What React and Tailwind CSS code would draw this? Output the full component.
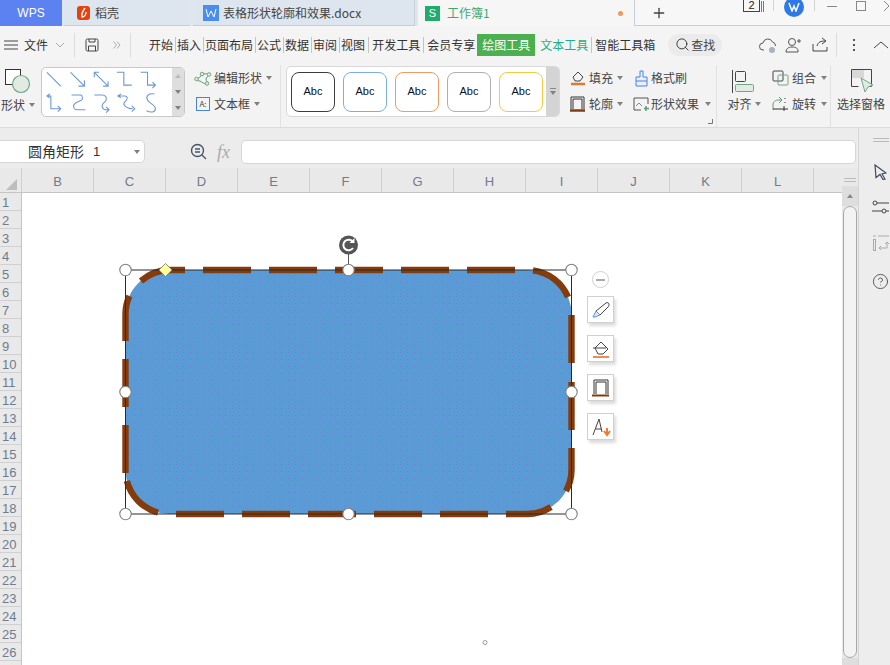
import { CircleHelp, Plus, Search } from "lucide-react";

const font = "font-['Noto_Sans_CJK_SC','Liberation_Sans',sans-serif]";
const columns = ["B", "C", "D", "E", "F", "G", "H", "I", "J", "K", "L"];
const rows = Array.from({ length: 26 }, (_, i) => i + 1);
const styleColors = [
  "border-[#3d3d3d]",
  "border-[#7cb0e4]",
  "border-[#ee9b66]",
  "border-[#b0b0b0]",
  "border-[#f7c93e]",
];
const menuItems = [
  { label: "插入", sep: "ml-[2px] mr-[1px]" },
  { label: "页面布局", sep: "ml-[2px] mr-[1px]" },
  { label: "公式", sep: "ml-[2px] mr-[1px]" },
  { label: "数据", sep: "ml-[2px] mr-[1px]" },
  { label: "审阅", sep: "ml-[2px] mr-[1px]" },
  { label: "视图", sep: "ml-[2px] mr-[1px]" },
  { label: "开发工具", sep: "ml-[3px] mr-[3px]" },
  { label: "会员专享", sep: "ml-[3px] mr-[3px]" },
];
const topDashes = [203, 269, 335, 401, 467];
const bottomDashes = [176, 242, 308, 374, 440];
const rightDashes = [315, 382];
const leftDashes = [359, 425];
const handles = [
  [125.5, 270], [348.5, 270], [571.5, 270], [125.5, 392],
  [571.5, 392], [125.5, 514], [348.5, 514], [571.5, 514],
];

function Caret({ className = "" }) {
  return <span className={`inline-block border-x-[3px] border-t-[4px] border-x-transparent border-t-[#808080] ${className}`} />;
}

function RibbonRow({ icon, label, iconWidth = "w-[20px]", gap = "ml-0", caret = "ml-[4px]" }) {
  return (
    <div className="flex h-[26px] items-center">
      <span className={`flex justify-center ${iconWidth}`}>{icon}</span>
      <span className={`text-[12px] text-[#444] ${gap}`}>{label}</span>
      {caret ? <Caret className={caret} /> : null}
    </div>
  );
}

function Stroke({ w = 16, h = 16, box, children, className = "" }) {
  return (
    <svg width={w} height={h} viewBox={box || `0 0 ${w} ${h}`} fill="none" className={className}>
      {children}
    </svg>
  );
}

function ShapeGallery() {
  return (
    <svg width="132" height="48" viewBox="41 67 132 48" fill="none" stroke="#6c97d6" strokeWidth="1.1">
      <path d="M46 71l14 14" />
      <path d="M70 71l14 14M84 79v6h-6" />
      <path d="M94 71l14 14M94 76v-5h5M108 80v5h-5" />
      <path d="M117 71h7v13h8" />
      <path d="M141 71h7v13h8M153 81l3 3-3 3" />
      <path d="M49 93l-3 2 3 2M46 95h4v13h10M57 105l3 3-3 3" />
      <path d="M71 94h9c2 0 2 2 2 4s-9 3-9 7 2 4 4 4h8" />
      <path d="M94 94h8c3 0 5 2 4 5-1 3-4 3-4 6s2 4 4 4h3M106 106l3 3-3 3" />
      <path d="M121 93l-3 2 3 2M118 95h7c3 0 3 3 1 5s-3 3-1 5 4 3 8 3M132 105l3 3-3 3" />
      <path d="M155 93c-6-1-9 2-7 6s8 5 8 9-5 4-9 2" />
    </svg>
  );
}

function ShapeDrawing() {
  return (
    <svg width="500" height="430" viewBox="112 233 500 430" className="absolute left-[90px] top-[40px]" fill="none">
      <defs>
        <pattern id="dots" width="7" height="7" patternUnits="userSpaceOnUse">
          <rect x="1" y="2" width="1" height="1" fill="#6d80dc" />
          <rect x="5" y="5" width="1" height="1" fill="#6d8ae0" />
        </pattern>
      </defs>
      <rect x="125.5" y="270" width="446" height="244" rx="44" fill="#5b9bd5" />
      <rect x="125.5" y="270" width="446" height="244" rx="44" fill="url(#dots)" />
      <g stroke="#843c0c" strokeWidth="6.4">
        <path d="M141 281A44 44 0 0 1 169.5 270H185" />
        {topDashes.map((x) => <path key={x} d={`M${x} 270h48`} />)}
        <path d="M533 270.3A44 44 0 0 1 568 297" />
        {rightDashes.map((y) => <path key={y} d={`M571.5 ${y}v48`} />)}
        <path d="M571.5 448V470A44 44 0 0 1 566 491" />
        <path d="M506 514H527.5A44 44 0 0 0 551 507" />
        {bottomDashes.map((x) => <path key={x} d={`M${x} 514h48`} />)}
        <path d="M158 512.5A44 44 0 0 1 126.9 481" />
        {leftDashes.map((y) => <path key={y} d={`M125.5 ${y}v48`} />)}
        <path d="M125.5 341V314A44 44 0 0 1 129.4 296" />
      </g>
      <rect x="125.5" y="270" width="446" height="244" stroke="#2a2a2a" strokeWidth="1" />
      <path d="M348.5 270V253" stroke="#555" />
      {handles.map(([x, y]) => (
        <circle key={`${x}-${y}`} cx={x} cy={y} r="5.7" fill="#fff" stroke="#808080" strokeWidth="1.1" />
      ))}
      <path d="M165.5 263.5l6.5 6.5-6.5 6.5-6.5-6.5z" fill="#ffff9c" stroke="#8c8c78" />
      <circle cx="348.5" cy="245" r="9.500" fill="#555" />
      <path d="M353 248a5.3 5.3 0 1 1 0-6" stroke="#fff" strokeWidth="2" />
      <path d="M354.500 238v5h-5z" fill="#fff" />
      <circle cx="485" cy="642.500" r="2" fill="#fff" stroke="#99a" />
    </svg>
  );
}

function FloatButton({ children }) {
  return (
    <div className="flex h-[27px] w-[27px] items-center justify-center border border-[#d0d0d0] bg-white shadow-[2px_3px_3px_rgba(0,0,0,0.14)]">
      {children}
    </div>
  );
}

function FloatTools() {
  return (
    <div className="absolute left-[565px] top-[78px] flex flex-col items-center">
      <div className="flex h-[17px] w-[17px] items-center justify-center rounded-full border border-[#cfcfcf] bg-white">
        <span className="h-[2px] w-[9px] bg-[#aaa]" />
      </div>
      <div className="mt-[8px] flex flex-col gap-[12px]">
        <FloatButton>
          <Stroke w={20} h={20}>
            <path d="M2 17l3-6 4 4-5 2z" fill="#dbe8fa" stroke="#5b8fdc" />
            <path d="M5 11L15 3c1-1 3 0 3 1s0 2-1 3L9 15" stroke="#444" />
          </Stroke>
        </FloatButton>
        <FloatButton>
          <Stroke w={20} h={20}>
            <path d="M4 9l6-6 7 7-5 5H7z" stroke="#444" />
            <path d="M2 9h13" stroke="#444" />
            <path d="M2 18h16" stroke="#e8742c" strokeWidth="1.6" />
          </Stroke>
        </FloatButton>
        <FloatButton>
          <Stroke w={20} h={20}>
            <path d="M3 16V2h14v14M5 16V4h10v12" stroke="#333" />
            <path d="M1 17.500h17" stroke="#843c0c" strokeWidth="2" />
          </Stroke>
        </FloatButton>
        <FloatButton>
          <Stroke w={20} h={20}>
            <path d="M2 18L8 2l3 13M4.500 12h6" stroke="#444" />
            <path d="M16 11v6m-3-3l3 4 3-4" stroke="#ee7b30" strokeWidth="2" />
          </Stroke>
        </FloatButton>
      </div>
    </div>
  );
}

function TabBar() {
  return (
    <div className="flex h-[26px] bg-[#dfe6ee]">
      <div className="flex w-[62px] items-center justify-center bg-[#5b82f0] text-[12px] text-white font-['Liberation_Sans',sans-serif]">WPS</div>
      <div className="ml-[2px] flex w-[126px] items-center border-b border-[#c5ced9] bg-[#dde6ee] pl-[13px]">
        <span className="flex h-[14px] w-[13px] items-center justify-center rounded-[3px] bg-[#e8400f]">
          <Stroke w={9} h={11}>
            <path d="M6 1C3 5 2 7 3 10c2 0 4-2 4-5" stroke="#fff" strokeWidth="1.5" />
          </Stroke>
        </span>
        <span className="ml-[5px] text-[12px] text-[#444]">稻壳</span>
      </div>
      <div className="ml-[3px] flex w-[222px] items-center border-b border-r border-[#c5ced9] bg-[#dde6ee] pl-[10px]">
        <span className="flex h-[16px] w-[16px] items-center justify-center bg-[#4a8cf0]">
          <Stroke w={12} h={10}>
            <path d="M1 1l2 8 3-6 3 6 2-8" stroke="#fff" />
          </Stroke>
        </span>
        <span className="ml-[4px] text-[12px] text-[#444]">表格形状轮廓和效果.docx</span>
      </div>
      <div className="ml-[3px] flex w-[217px] items-center border-r border-[#c5ced9] bg-[#f6f6f6] pl-[7px]">
        <span className="flex h-[15px] w-[15px] items-center justify-center bg-[#23ab6e] text-[11px] leading-none text-white font-['Liberation_Sans',sans-serif]">S</span>
        <span className="ml-[7px] text-[12px] text-[#3fa870]">工作簿1</span>
        <span className="ml-[128px] h-[5px] w-[5px] rounded-full bg-[#ee9a5a]" />
      </div>
      <div className="relative flex flex-1 items-center border-b border-[#c5ced9] bg-[#f7f7f7]">
        <Plus size={16} strokeWidth={2} className="ml-[16px] text-[#444]" />
        <div className="absolute left-[108px] top-0 flex items-center">
          <span className="flex h-[12px] w-[17px] items-center justify-center border border-t-0 border-[#33456b] text-[11px] leading-none text-[#222] font-['Liberation_Sans',sans-serif]">2</span>
          <span className="ml-[1px] h-[11px] w-[3px] border-x border-[#6b7c99]" />
        </div>
        <span className="absolute left-[138px] top-0 h-[11px] w-px bg-[#d4d4d4]" />
        <span className="absolute left-[149px] top-[-3px] flex h-[20px] w-[20px] items-center justify-center rounded-full bg-[#2f78e8]">
          <Stroke w={12} h={10}>
            <path d="M1 1l3 8 2-5 2 5 3-8" stroke="#fff" strokeWidth="1.5" />
          </Stroke>
        </span>
        <span className="absolute left-[179px] top-0 h-[11px] w-px bg-[#d4d4d4]" />
        <span className="absolute left-[192px] top-[6px] h-px w-[10px] bg-[#888]" />
        <span className="absolute left-[221px] top-[1px] h-[10px] w-[10px] border border-[#888]" />
        <Stroke w={6} h={10} className="absolute left-[249px] top-[1px]">
          <path d="M0 0l5 5-5 5" stroke="#888" />
        </Stroke>
      </div>
    </div>
  );
}

function MenuBar() {
  return (
    <div className="flex h-[34px] items-center bg-[#f4f4f4] pt-[3px] text-[12px] text-[#333]">
      <Stroke w={14} h={10} className="ml-[4px]">
        <path d="M0 1h14M0 5h14M0 9h14" stroke="#444" />
      </Stroke>
      <span className="ml-[6px]">文件</span>
      <Stroke w={10} h={6} className="ml-[7px]">
        <path d="M1 1l4 4 4-4" stroke="#aaa" />
      </Stroke>
      <span className="ml-[9px] h-[24px] w-px bg-[#dcdcdc]" />
      <Stroke w={14} h={14} className="ml-[10px]">
        <path d="M1 2.500a1.500 1.500 0 0 1 1.500-1.500h9a1.500 1.500 0 0 1 1.500 1.500v9a1.500 1.500 0 0 1-1.500 1.500h-9a1.500 1.500 0 0 1-1.500-1.500zM4 1v3h6V1M3.500 13V8h7v5" stroke="#444" />
      </Stroke>
      <Stroke w={8} h={8} className="ml-[14px]">
        <path d="M0.500 0.500l3 3.500-3 3.500M4 0.500l3 3.500-3 3.500" stroke="#aaa" />
      </Stroke>
      <span className="ml-[9px] h-[24px] w-px bg-[#dcdcdc]" />
      <span className="ml-[18px]">开始</span>
      {menuItems.map((item) => (
        <span key={item.label} className="flex items-center">
          <span className={`h-[16px] w-px bg-[#c4c4c4] ${item.sep}`} />
          {item.label}
        </span>
      ))}
      <span className="ml-[2px] flex h-[22px] w-[58px] items-center justify-center bg-[#4caf50] text-white">绘图工具</span>
      <span className="ml-[5px] text-[#1fae8a]">文本工具</span>
      <span className="ml-[3px] mr-[3px] h-[16px] w-px bg-[#c4c4c4]" />
      <span>智能工具箱</span>
      <span className="ml-[13px] flex h-[22px] w-[54px] items-center justify-center rounded-full bg-[#ebebeb]">
        <Search size={15} strokeWidth={1.5} className="text-[#333]" />
        <span className="ml-[1px] text-[#444]">查找</span>
      </span>
      <Stroke w={18} h={16} className="ml-[37px]">
        <path d="M5 13H4a3.500 3.500 0 0 1 0-7 5 5 0 0 1 9.500-1 4 4 0 0 1 3 4" stroke="#555" />
        <circle cx="13" cy="13" r="3" fill="#a9b2bd" />
      </Stroke>
      <Stroke w={17} h={16} className="ml-[8px]">
        <circle cx="7" cy="5" r="3.500" stroke="#555" />
        <path d="M1 15c0-3 2-5 6-5s5 1 6 3v2zM12 4h4M14 2v4" stroke="#555" />
      </Stroke>
      <Stroke w={16} h={15} className="ml-[10px]">
        <path d="M1 7v7h14v-4M5 9c1-4 4-5 8-5M10 1l4 3-4 3" stroke="#444" />
      </Stroke>
      <span className="ml-[8px] h-[24px] w-px bg-[#dcdcdc]" />
      <span className="ml-[16px] flex flex-col gap-[3px]">
        <span className="h-[2px] w-[2px] bg-[#555]" />
        <span className="h-[2px] w-[2px] bg-[#555]" />
        <span className="h-[2px] w-[2px] bg-[#555]" />
      </span>
      <Stroke w={14} h={8} className="ml-[19px]">
        <path d="M0 7l7-6 7 6" stroke="#444" />
      </Stroke>
    </div>
  );
}

function Ribbon() {
  return (
    <div className="flex h-[68px] border-b border-[#dcdcdc] bg-[#f3f3f3] pt-[5px]">
      <div className="flex w-[41px] flex-col items-start">
        <Stroke w={26} h={26} className="ml-[5px] mt-[4px]">
          <rect x="0.500" y="0.500" width="15" height="15" stroke="#333" fill="#fff" />
          <circle cx="16" cy="15" r="8.500" fill="#e1ebe4" stroke="#6fa882" strokeWidth="1.200" />
        </Stroke>
        <div className="ml-[1px] mt-[1px] flex items-center text-[12px] text-[#444]">
          形状<Caret className="ml-[4px]" />
        </div>
      </div>
      <div className="mt-[2px] flex h-[50px] w-[144px] overflow-hidden rounded-[5px] border border-[#c8c8c8] bg-white">
        <ShapeGallery />
        <div className="flex w-[12px] flex-col items-center justify-around bg-[#dedede]">
          <span className="border-x-[3px] border-b-[4px] border-x-transparent border-b-[#bbb]" />
          <Caret />
          <Caret />
        </div>
      </div>
      <div className="ml-[8px] w-[88px] border-r border-[#e2e2e2]">
        <RibbonRow
          label="编辑形状"
          gap="ml-[1px]"
          icon={
            <Stroke w={18} h={15}>
              <path d="M2 8c3 0 5-3 6-5 3 0 6-1 7 1-1 2-3 2-3 4s2 3 1 5c-3 0-5-2-7-3-1 0-3 0-4-2z" stroke="#5f9c76" />
              <circle cx="2.500" cy="8" r="1.800" fill="#e1ebe4" stroke="#6fa882" />
              <circle cx="8" cy="3" r="1.800" fill="#e1ebe4" stroke="#6fa882" />
              <circle cx="15" cy="3.500" r="1.800" fill="#e1ebe4" stroke="#6fa882" />
              <circle cx="13" cy="12.500" r="1.800" fill="#e1ebe4" stroke="#6fa882" />
            </Stroke>
          }
        />
        <RibbonRow
          label="文本框"
          gap="ml-[1px]"
          icon={
            <span className="flex h-[14px] w-[14px] items-center justify-center border border-[#4a82e0] text-[8px] leading-none text-[#444]">A:</span>
          }
        />
      </div>
      <div className="ml-[5px] mt-[1px] flex h-[51px] w-[274px] overflow-hidden rounded-[5px] border border-[#d8d8d8] bg-white">
        <div className="flex flex-1 items-center gap-[8px] pl-[4px]">
          {styleColors.map((color) => (
            <div key={color} className={`flex h-[40px] w-[44px] items-center justify-center rounded-[8px] border-[1.5px] bg-white text-[11px] text-[#111] font-['Liberation_Sans',sans-serif] ${color}`}>
              Abc
            </div>
          ))}
        </div>
        <div className="flex w-[13px] flex-col items-center justify-center gap-[2px] bg-[#d4d4d4]">
          <span className="h-px w-[6px] bg-[#888]" />
          <Caret />
        </div>
      </div>
      <div className="ml-[9px] w-[62px]">
        <RibbonRow
          label="填充"
          iconWidth="w-[17px]"
          gap="ml-[3px]"
          icon={
            <Stroke w={16} h={16}>
              <path d="M3 7l5-5 5 5-3 4H5z" stroke="#444" />
              <path d="M1 14h14" stroke="#dd7a32" strokeWidth="2.500" />
            </Stroke>
          }
        />
        <RibbonRow
          label="轮廓"
          iconWidth="w-[17px]"
          gap="ml-[3px]"
          icon={
            <Stroke w={15} h={16}>
              <path d="M1 13V1h13v12M3 13V3h9v10" stroke="#333" />
              <path d="M0 14.500h15" stroke="#843c0c" strokeWidth="2.500" />
            </Stroke>
          }
        />
      </div>
      <div className="relative w-[86px] border-r border-[#e2e2e2]">
        <RibbonRow
          label="格式刷"
          caret={null}
          icon={
            <Stroke w={13} h={17}>
              <path d="M5 1h3v6h4v9H1V7h4z" stroke="#4a82e0" fill="#e9f0fb" />
              <path d="M1 11h11" stroke="#4a82e0" />
            </Stroke>
          }
        />
        <RibbonRow
          label="形状效果"
          caret="ml-[6px]"
          icon={
            <Stroke w={17} h={15}>
              <path d="M1 1h14v6M1 1v12h7" stroke="#555" />
              <path d="M3 9l3-3 3 3" stroke="#888" />
              <path d="M13 9v5M11 11.500h5" stroke="#5f9c76" strokeWidth="1.500" />
            </Stroke>
          }
        />
        <Stroke w={5} h={5} className="absolute right-[3px] top-[54px]">
          <path d="M4.500 0v4.500H0" stroke="#777" />
        </Stroke>
      </div>
      <div className="flex w-[48px] flex-col items-center">
        <Stroke w={22} h={23} className="ml-[4px] mt-[5px]">
          <path d="M0.500 0v23" stroke="#444" />
          <rect x="3.500" y="1.500" width="10" height="10" rx="1" stroke="#444" />
          <rect x="3.500" y="14.500" width="18" height="7" rx="1" stroke="#6fa882" fill="#e1ebe4" />
        </Stroke>
        <div className="ml-[6px] mt-[2px] flex items-center text-[12px] text-[#444]">
          对齐<Caret className="ml-[3px]" />
        </div>
      </div>
      <div className="w-[66px] border-r border-[#e2e2e2]">
        <RibbonRow
          label="组合"
          gap="ml-[3px]"
          caret="ml-[5px]"
          iconWidth="w-[24px] pl-[6px]"
          icon={
            <Stroke w={17} h={16}>
              <rect x="1" y="1" width="10" height="10" rx="1" stroke="#444" />
              <rect x="6" y="5" width="10" height="10" rx="1" stroke="#6fa882" />
            </Stroke>
          }
        />
        <RibbonRow
          label="旋转"
          gap="ml-[3px]"
          caret="ml-[5px]"
          iconWidth="w-[24px] pl-[6px]"
          icon={
            <Stroke w={17} h={16}>
              <path d="M1 14V9c0-3 2-5 6-5h2M7 1l3 3-3 3" stroke="#5f9c76" />
              <path d="M1 13h15M12 10v5M13 2v1M13 6v1" stroke="#333" />
            </Stroke>
          }
        />
      </div>
      <div className="flex flex-1 flex-col items-center">
        <Stroke w={24} h={24} className="ml-[4px] mt-[4px]">
          <path d="M0.500 0.500h20v17h-4M0.500 0.500v17h7" stroke="#444" />
          <rect x="1" y="1" width="12" height="8" fill="#d8d8d8" />
          <path d="M10 9l12 7-5 2-3 5z" fill="#e1ebe4" stroke="#6fa882" />
        </Stroke>
        <span className="ml-[1px] mt-[2px] text-[12px] text-[#444]">选择窗格</span>
      </div>
    </div>
  );
}

function FormulaBar() {
  return (
    <div className="flex h-[40px] items-center bg-[#ececec] pt-[7px]">
      <div className="flex h-[23px] w-[145px] items-center rounded-r-[5px] border border-l-0 border-[#d6d6d6] bg-white pl-[28px] text-[14px] text-[#333]">
        圆角矩形<span className="ml-[9px] font-['Liberation_Sans',sans-serif] text-[13px]">1</span>
        <Caret className="ml-auto mr-[4px]" />
      </div>
      <Stroke w={17} h={17} className="ml-[45px]">
        <circle cx="7.500" cy="7.500" r="6" stroke="#4a5568" strokeWidth="1.400" />
        <path d="M5 6h5M5 9h5M12 12l4 4" stroke="#4a5568" strokeWidth="1.300" />
      </Stroke>
      <span className="ml-[10px] font-['Liberation_Serif',serif] text-[18px] italic leading-none text-[#aaa]">fx</span>
      <div className="ml-[11px] h-[24px] w-[615px] rounded-[5px] border border-[#d6d6d6] bg-white" />
    </div>
  );
}

function Sheet() {
  return (
    <div className="flex h-[497px]">
      <div className="flex w-[842px] flex-col">
        <div className="flex h-[25px] border-b border-[#c4c4c4] bg-[#e9e9e9]">
          <div className="relative w-[22px] border-r border-[#d0d0d0]">
            <span className="absolute bottom-[2px] right-[4px] border-b-[11px] border-l-[11px] border-b-[#bdbdbd] border-l-transparent" />
          </div>
          {columns.map((c) => (
            <div key={c} className="flex w-[72px] items-center justify-center border-r border-[#cfcfcf] pt-[4px] text-[13px] text-[#6f7c8c] font-['Liberation_Sans',sans-serif]">
              {c}
            </div>
          ))}
        </div>
        <div className="flex min-h-0 flex-1 overflow-hidden">
          <div className="w-[22px] shrink-0 border-r border-[#c4c4c4] bg-[#e9e9e9]">
            {rows.map((r) => (
              <div key={r} className="flex h-[18px] items-center border-b border-[#d0d0d0] pl-[2px] pt-[2px] text-[13px] leading-none text-[#6f7c8c] font-['Liberation_Sans',sans-serif]">
                {r}
              </div>
            ))}
          </div>
          <div className="relative flex-1 bg-white">
            <ShapeDrawing />
            <FloatTools />
          </div>
        </div>
      </div>
      <div className="flex w-[16px] flex-col bg-[#e9e9e9]">
        <div className="flex h-[18px] flex-col justify-end gap-[2px] px-[2px] pb-[4px]">
          <span className="h-px bg-[#bbb]" />
          <span className="h-px bg-[#bbb]" />
        </div>
        <div className="flex h-[20px] items-center justify-center bg-[#dedede]">
          <span className="border-x-[3px] border-b-[4px] border-x-transparent border-b-[#888]" />
        </div>
        <div className="mx-auto h-[452px] w-[14px] rounded-full border border-[#a8a8a8] bg-[#f3f3f3]" />
        <div className="flex-1 bg-[#dedede]" />
      </div>
    </div>
  );
}

function SideBar() {
  return (
    <div className="flex w-[32px] flex-col items-center border-l border-[#d4d4d4] bg-[#ededed] pl-[12px] pt-[10px]">
      <span className="h-px w-[16px] bg-[#bbb]" />
      <span className="mt-[2px] h-px w-[16px] bg-[#bbb]" />
      <Stroke w={13} h={16} className="mt-[22px]">
        <path d="M1 1l11 8-4 1 3 5-2 .500-3-5-4 3z" stroke="#3d4a63" strokeWidth="1.200" />
      </Stroke>
      <Stroke w={17} h={14} className="mt-[20px]">
        <circle cx="3" cy="3" r="2" stroke="#444" />
        <circle cx="12" cy="11" r="2" stroke="#444" />
        <path d="M5 3h12M0 11h10M14 11h3" stroke="#444" />
      </Stroke>
      <Stroke w={16} h={16} className="mt-[21px]">
        <rect x="0.500" y="4.500" width="2" height="11" stroke="#aaa" />
        <path d="M0 1h3M5 1h11M6 13h8V7M12 9l2-2 2 2M6 13l2-2M6 13l2 2" stroke="#aaa" />
      </Stroke>
      <CircleHelp size={17} strokeWidth={1.2} className="mt-[22px] text-[#444]" />
    </div>
  );
}

export default function App() {
  return (
    <div className={`flex h-[665px] w-[890px] flex-col overflow-hidden bg-[#f3f3f3] ${font}`}>
      <TabBar />
      <MenuBar />
      <Ribbon />
      <div className="flex min-h-0 flex-1">
        <div className="flex w-[858px] flex-col">
          <FormulaBar />
          <Sheet />
        </div>
        <SideBar />
      </div>
    </div>
  );
}
